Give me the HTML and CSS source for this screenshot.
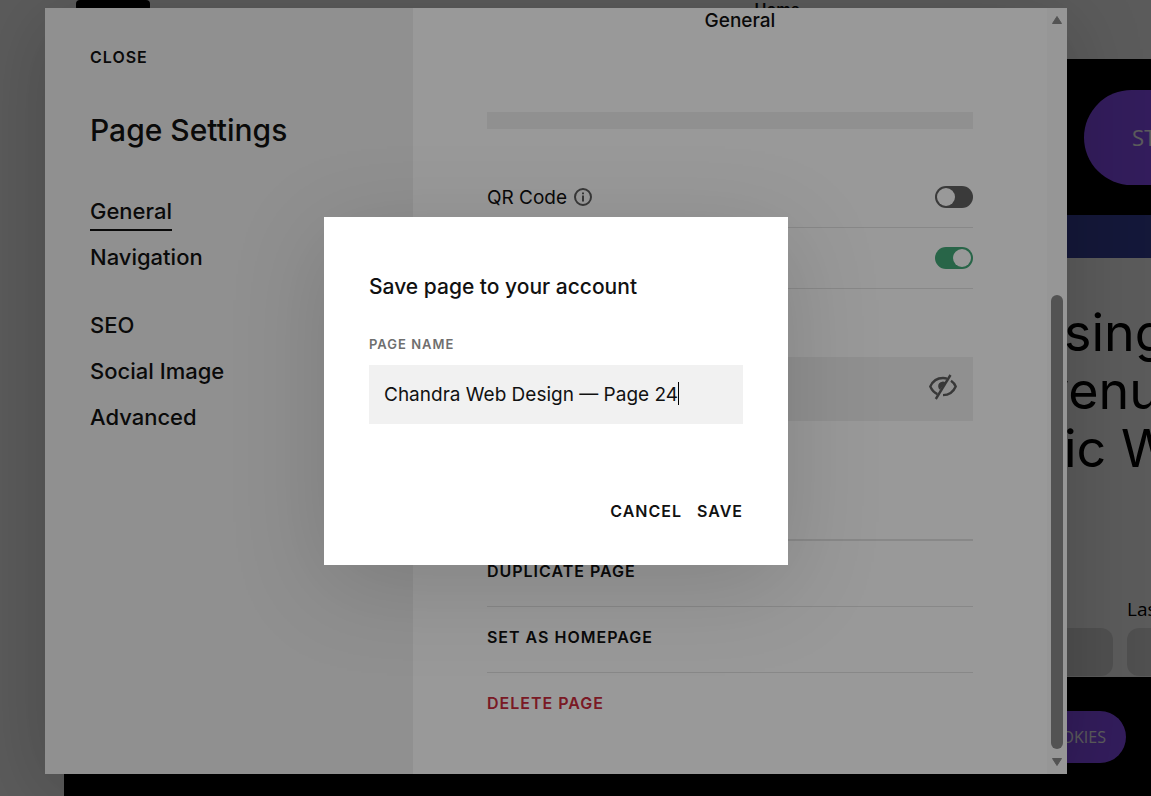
FILE: index.html
```html
<!DOCTYPE html>
<html lang="en">
<head>
  <meta charset="UTF-8" />
  <meta name="viewport" content="width=device-width, initial-scale=1.0" />
  <title>Page Settings</title>
  <link rel="stylesheet" href="styles.css">
</head>
<body>
  <!-- site being edited -->
  <div class="site">
    <div class="topbar">
      <div class="topbar-tab"></div>
      <span class="topbar-title">Home</span>
    </div>
    <div class="canvas">
      <div class="site-header">
        <button class="site-cta" type="button">START</button>
      </div>
      <div class="site-strip"></div>
      <div class="site-content">
        <h2 class="site-headline">
          <span>sing</span>
          <span class="outdent">venu</span>
          <span>ic W</span>
        </h2>
        <div class="site-form">
          <label class="site-field"><span>First</span><input type="text"></label>
          <label class="site-field"><span>Last</span><input type="text"></label>
        </div>
      </div>
      <div class="site-footer">
        <button class="cookie-btn" type="button">COOKIES</button>
      </div>
    </div>
  </div>

  <!-- settings panel -->
  <div class="layer">
    <div class="settings">
      <aside class="sidebar">
        <button class="text-btn" type="button">CLOSE</button>
        <h1>Page Settings</h1>
        <nav>
          <a href="#general" class="active">General</a>
          <a href="#navigation">Navigation</a>
        </nav>
        <nav>
          <a href="#seo">SEO</a>
          <a href="#social">Social Image</a>
          <a href="#advanced">Advanced</a>
        </nav>
      </aside>
      <main class="panel">
        <h2 class="panel-title">General</h2>
        <div class="panel-content">
          <div class="field-end"></div>
          <div class="toggle-row">
            <label for="qr">QR Code</label>
            <svg class="info" viewBox="0 0 18 18" width="18" height="18">
              <circle cx="9" cy="9" r="8" fill="none" stroke="#5e5e5e" stroke-width="2"/>
              <path d="M9 7.4v6M9 4.4v1.8" stroke="#5e5e5e" stroke-width="2"/>
            </svg>
            <input type="checkbox" class="toggle" id="qr">
          </div>
          <div class="toggle-row">
            <input type="checkbox" class="toggle" aria-label="Enable page" checked>
          </div>
          <div class="password">
            <button class="eye" type="button" aria-label="Show password">
              <svg viewBox="0 0 28 26" width="28" height="26" fill="none" stroke="#5e5e5e" stroke-width="2.4">
                <path d="M18 4.6C16.800 4.200 15.400 4 14 4 8 4 3.500 7.600 1.300 12.500 2.800 16 5.300 18.700 8.400 20.200"/>
                <path d="M22 6.800C24.200 8.300 25.800 10.300 26.700 12.500 24.500 17.600 20 21.100 14 21.100"/>
                <path d="M21.500 1L6.800 25"/>
                <path d="M16.600 8.600A4.300 4.300 0 0 0 10.900 15.800Z" fill="#5e5e5e" stroke="none"/>
              </svg>
            </button>
          </div>
          <div class="actions">
            <button class="text-btn" type="button">DUPLICATE PAGE</button>
            <button class="text-btn" type="button">SET AS HOMEPAGE</button>
            <button class="text-btn danger" type="button">DELETE PAGE</button>
          </div>
        </div>
      </main>
      <div class="scrollbar">
        <svg viewBox="0 0 10 8" width="10" height="8"><path d="M5 0.500L9.500 7.500H0.500Z" fill="#8b8b8b" stroke="#8b8b8b" stroke-linejoin="round"/></svg>
        <div class="thumb"></div>
        <svg viewBox="0 0 10 8" width="10" height="8"><path d="M5 7.500L9.500 0.500H0.500Z" fill="#8b8b8b" stroke="#8b8b8b" stroke-linejoin="round"/></svg>
      </div>
    </div>
  </div>

  <!-- save dialog -->
  <div class="layer center">
    <form class="dialog" role="dialog" aria-labelledby="dialog-title">
      <h2 id="dialog-title">Save page to your account</h2>
      <label for="page-name">PAGE NAME</label>
      <div class="name-box">
        <input type="text" id="page-name" value="Chandra Web Design — Page 24">
        <span class="caret"></span>
      </div>
      <div class="dialog-actions">
        <button class="text-btn" type="button">CANCEL</button>
        <button class="text-btn" type="submit">SAVE</button>
      </div>
    </form>
  </div>
</body>
</html>
```
FILE: styles.css
```css
* {
  box-sizing: border-box;
}

body {
  margin: 0;
  font-family: Inter, "Liberation Sans", sans-serif;
  color: #111;
}

h1, h2 {
  margin: 0;
  font-weight: 500;
}

button {
  border: none;
  padding: 0;
  background: none;
  font-family: inherit;
  color: inherit;
  cursor: pointer;
}

/* site */
.site {
  position: fixed;
  inset: 0;
  display: flex;
  flex-direction: column;
  overflow: hidden;
  background: #fdfdfd;
}

.topbar {
  display: flex;
  justify-content: space-between;
  height: 59px;
  padding-left: 76px;
  padding-right: 351px;
}

.topbar-tab {
  width: 74px;
  height: 11px;
  border-radius: 4px;
  background: #000;
}

.topbar-title {
  font-size: 16px;
  line-height: 18px;
  font-weight: 600;
}

.canvas {
  flex: 1;
  display: flex;
  flex-direction: column;
  margin-left: 64px;
}

.site-header {
  display: flex;
  justify-content: flex-end;
  align-items: center;
  height: 156px;
  background: #000;
}

.site-cta {
  flex: none;
  width: 160px;
  height: 95px;
  margin-right: -93px;
  border-radius: 48px;
  background: #8e51ff;
  color: #fff;
  font-family: "Open Sans", sans-serif;
  font-size: 22px;
}

.site-strip {
  height: 43px;
  background: #3a44a0;
}

.site-content {
  display: flex;
  flex-direction: column;
  align-items: flex-end;
  justify-content: space-between;
  height: 419px;
  padding-top: 46px;
}

.site-headline {
  width: 87px;
  font-size: 52px;
  line-height: 58px;
  font-weight: 400;
  color: #000;
  white-space: nowrap;
}

.site-headline span {
  display: block;
}

.site-headline .outdent {
  margin-left: -24px;
}

.site-form {
  display: flex;
  gap: 14px;
  margin-right: -176px;
  padding-bottom: 1px;
}

.site-field {
  width: 200px;
  font-family: "Open Sans", sans-serif;
  font-size: 19px;
  line-height: 30px;
  color: #000;
}

.site-field input {
  display: block;
  width: 100%;
  height: 48px;
  margin-top: 4px;
  border: none;
  border-radius: 12px;
  background: #dedede;
}

.site-footer {
  flex: 1;
  display: flex;
  justify-content: flex-end;
  align-items: flex-start;
  padding: 34px 25px 0;
  background: #000;
}

.cookie-btn {
  height: 52px;
  padding: 0 20px;
  border-radius: 26px;
  background: #8e51ff;
  color: #fff;
  font-family: "Open Sans", sans-serif;
  font-size: 16px;
}

/* overlays */
.layer {
  position: fixed;
  inset: 0;
  display: flex;
  padding: 8px 84px 22px 45px;
  background: rgba(0, 0, 0, 0.4);
}

.center {
  justify-content: center;
  align-items: center;
}

.text-btn {
  font-size: 16px;
  line-height: 20px;
  font-weight: 600;
  letter-spacing: 1px;
  text-align: left;
}

/* settings */
.settings {
  flex: 1;
  display: flex;
  overflow: hidden;
  background: #fff;
  box-shadow: 0 15px 75px rgba(0, 0, 0, 0.2);
}

.sidebar {
  width: 36%;
  padding: 39px 45px;
  background: #f1f1f1;
}

.sidebar h1 {
  margin: 43px 0;
  font-size: 30px;
  line-height: 40px;
}

.sidebar nav {
  display: flex;
  flex-direction: column;
  align-items: flex-start;
  gap: 8px;
  margin-bottom: 30px;
}

.sidebar a {
  border-bottom: 2px solid transparent;
  font-size: 22px;
  line-height: 36px;
  font-weight: 500;
  color: inherit;
  text-decoration: none;
}

.sidebar .active {
  border-color: #111;
}

.panel {
  flex: 1;
}

.panel-title {
  padding-left: 20px;
  font-size: 19px;
  line-height: 26px;
  text-align: center;
}

.panel-content {
  padding: 78px 74px 0;
}

.field-end {
  height: 17px;
  margin-bottom: 38px;
  background: #f1f1f1;
}

.toggle-row {
  display: flex;
  align-items: center;
  gap: 7px;
  height: 61px;
  border-bottom: 1px solid #e3e3e3;
  font-size: 19px;
}

.toggle {
  appearance: none;
  width: 38px;
  height: 22px;
  margin: 0 0 0 auto;
  padding: 2px;
  border-radius: 11px;
  background: #616161;
}

.toggle::before {
  content: "";
  display: block;
  width: 18px;
  height: 18px;
  border-radius: 50%;
  background: #fff;
}

.toggle:checked {
  background: #43a878;
}

.toggle:checked::before {
  margin-left: auto;
}

.password {
  display: flex;
  justify-content: flex-end;
  align-items: center;
  height: 64px;
  margin: 68px 0 118px;
  padding-right: 16px;
  background: #f1f1f1;
}

.eye {
  display: flex;
  padding-bottom: 4px;
}

.actions {
  border-top: 2px solid #e3e3e3;
}

.actions .text-btn {
  display: block;
  width: 100%;
  height: 66px;
  padding-bottom: 6px;
  border-bottom: 1px solid #e3e3e3;
}

.actions .danger {
  border-bottom: none;
  color: #cb2b3c;
}

.scrollbar {
  display: flex;
  flex-direction: column;
  align-items: center;
  width: 20px;
  padding: 8px 0;
  background: #fafafa;
}

.thumb {
  width: 12px;
  height: 454px;
  margin: auto 0 9px;
  border-radius: 6px;
  background: #8b8b8b;
}

/* dialog */
.dialog {
  width: 464px;
  padding: 54px 45px 44px;
  background: #fff;
  box-shadow: 0 20px 90px rgba(0, 0, 0, 0.15);
}

.dialog h2 {
  margin-bottom: 30px;
  font-size: 21px;
  line-height: 32px;
}

.dialog label {
  display: block;
  margin-bottom: 10px;
  font-size: 13px;
  line-height: 22px;
  font-weight: 600;
  letter-spacing: 1px;
  color: #6f6f6f;
}

.name-box {
  position: relative;
}

.name-box input {
  width: 100%;
  height: 59px;
  padding: 0 15px;
  border: none;
  outline: none;
  background: #f1f1f1;
  font-family: inherit;
  font-size: 19px;
  color: #111;
}

.caret {
  position: absolute;
  top: 17px;
  left: 309px;
  width: 1px;
  height: 23px;
  background: #000;
}

.dialog-actions {
  display: flex;
  justify-content: flex-end;
  gap: 15px;
  margin-top: 77px;
}
```
